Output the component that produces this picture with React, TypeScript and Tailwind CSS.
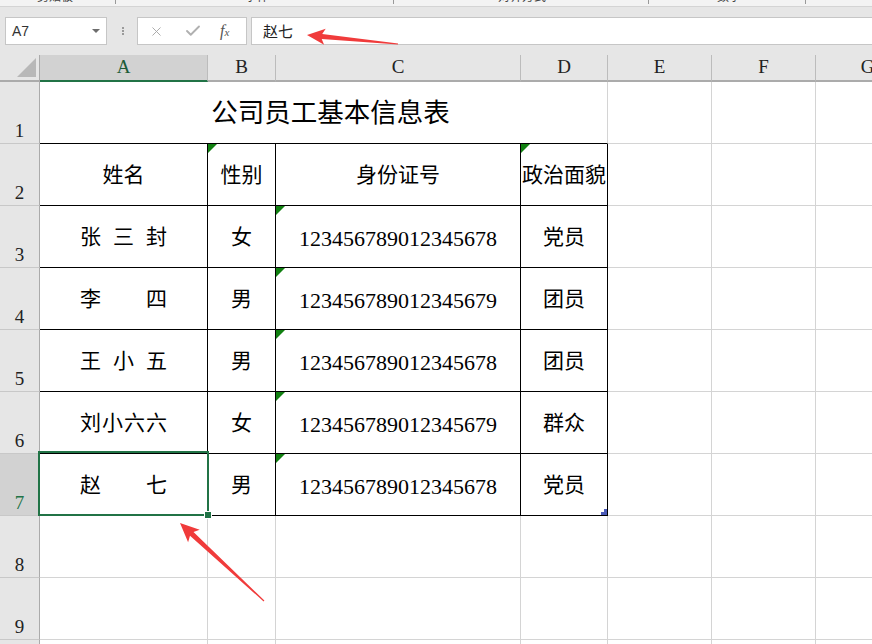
import React from 'react';
import { X, Check } from 'lucide-react';

const cols = [
  { l: 'A', sel: true },
  { l: 'B' },
  { l: 'C' },
  { l: 'D' },
  { l: 'E' },
  { l: 'F' },
  { l: 'G' },
];

const people = [
  { name: ['张', '三', '封'], sex: '女', id: '123456789012345678', pol: '党员' },
  { name: ['李', '四'], sex: '男', id: '123456789012345679', pol: '团员' },
  { name: ['王', '小', '五'], sex: '男', id: '123456789012345678', pol: '团员' },
  { name: ['刘', '小', '六', '六'], sex: '女', id: '123456789012345679', pol: '群众' },
  { name: ['赵', '七'], sex: '男', id: '123456789012345678', pol: '党员' },
];

const serif = "font-['Liberation_Serif','Noto_Sans_CJK_SC',serif]";
const grid = 'border-r border-b border-[#d4d4d4]';
const boxed = 'border-r border-b border-black pt-[3px]';

function Flag() {
  return (
    <svg className="absolute left-0 top-0" width="9" height="9" viewBox="0 0 9 9">
      <polygon points="0,0 9,0 0,9" fill="#118011" />
    </svg>
  );
}

function RowHead({ n, sel }: { n: number; sel?: boolean }) {
  return (
    <div
      className={`h-[62px] border-r border-r-[#ababab] border-b border-b-[#c8c8c8] flex items-end justify-center pb-[3px] text-[19px] leading-none ${serif} ${
        sel ? 'bg-[#d2d2d2] text-[#217346]' : 'bg-[#e6e6e6] text-[#222]'
      }`}
    >
      {n}
    </div>
  );
}

function arrow(tx: number, ty: number, sx: number, sy: number, hl: number, hw: number, nw: number, tw: number) {
  const dx = sx - tx;
  const dy = sy - ty;
  const len = Math.hypot(dx, dy);
  const ux = dx / len;
  const uy = dy / len;
  const px = -uy;
  const py = ux;
  const p = (d: number, w: number) => `${(tx + ux * d + px * w).toFixed(1)},${(ty + uy * d + py * w).toFixed(1)}`;
  return [p(0, 0), p(hl + 3, hw), p(hl, nw), p(len, tw), p(len, -tw), p(hl, -nw), p(hl + 3, -hw)].join(' ');
}

export default function App() {
  return (
    <div className="relative w-[872px] h-[644px] overflow-hidden bg-white font-['Liberation_Sans','Noto_Sans_CJK_SC',sans-serif]">
      {/* ribbon group labels, mostly scrolled off */}
      <div className="h-[7px] bg-[#f3f3f3] border-b border-[#d4d4d4] overflow-hidden">
        <div className="-mt-[12px] flex items-end h-[16px] text-[12px] leading-[16px] text-[#444] font-['Noto_Sans_CJK_SC',sans-serif]">
          <span className="ml-[37px] w-[78px]">剪贴板</span>
          <span className="w-[130px] h-[14px] border-l border-[#999]" />
          <span className="w-[148px]">字体</span>
          <span className="w-[105px] h-[14px] border-l border-[#999]" />
          <span className="w-[150px]">对齐方式</span>
          <span className="w-[69px] h-[14px] border-l border-[#999]" />
          <span className="w-[88px]">数字</span>
          <span className="w-[40px] h-[14px] border-l border-[#999]" />
        </div>
      </div>

      {/* name box + formula bar */}
      <div className="h-[48px] bg-[#e6e6e6] pt-[10px] flex items-start">
        <div className="ml-[5px] w-[102px] h-[28px] bg-white border border-[#c6c6c6] flex items-center pl-[6px] pr-[6px]">
          <span className="flex-1 text-[14px] text-[#333]">A7</span>
          <svg width="8" height="4" viewBox="0 0 8 4">
            <polygon points="0,0 8,0 4,4" fill="#6d6d6d" />
          </svg>
        </div>
        <div className="ml-[15px] mt-[10px] flex flex-col gap-[1px]">
          <span className="w-[2px] h-[2px] bg-[#9a9a9a]" />
          <span className="w-[2px] h-[2px] bg-[#9a9a9a]" />
          <span className="w-[2px] h-[2px] bg-[#9a9a9a]" />
        </div>
        <div className="ml-[13px] w-[110px] h-[28px] bg-white border border-[#c6c6c6] flex items-center pl-[11px]">
          <X size={15} strokeWidth={1.5} color="#a6a6a6" />
          <Check size={18} strokeWidth={2.5} color="#b0b0b0" className="ml-[20px]" />
          <span className="ml-[18px] text-[16px] italic text-[#555] font-['Liberation_Serif',serif]">
            f<span className="text-[11px]">x</span>
          </span>
        </div>
        <div className="ml-[4px] flex-1 -mr-[4px] h-[28px] bg-white border border-[#c6c6c6] flex items-center pl-[11px]">
          <span className="text-[15px] text-[#222] font-['Noto_Sans_CJK_SC',sans-serif]">赵七</span>
        </div>
      </div>

      {/* sheet */}
      <div className={`relative grid grid-cols-[40px_168px_68px_245px_87px_104px_104px_104px] ${serif} text-black`}>
        {/* column header */}
        <div className="h-[27px] bg-[#e6e6e6] border-r border-[#ababab] border-b-2 border-b-[#ababab] flex items-end justify-end pr-[3px] pb-[3px]">
          <svg width="19" height="19" viewBox="0 0 19 19">
            <polygon points="19,0 19,19 0,19" fill="#b8b8b8" />
          </svg>
        </div>
        {cols.map((c) => (
          <div
            key={c.l}
            className={`h-[27px] flex items-center justify-center text-[19px] border-r border-r-[#bcbcbc] border-b-2 ${
              c.sel ? 'bg-[#d2d2d2] border-b-[#217346] text-[#1d5c38]' : 'bg-[#e6e6e6] border-b-[#ababab] text-[#222]'
            }`}
          >
            {c.l}
          </div>
        ))}

        {/* row 1: title */}
        <RowHead n={1} />
        <div className="col-span-4 h-[62px] border-r border-r-[#d4d4d4] border-b border-b-black flex items-center justify-center pl-[14px] pt-[3px] text-[26.5px]">
          公司员工基本信息表
        </div>
        <div className={grid} />
        <div className={grid} />
        <div className={grid} />

        {/* row 2: headings */}
        <RowHead n={2} />
        <div className={`${boxed} h-[62px] flex items-center justify-center text-[21px]`}>姓名</div>
        <div className={`${boxed} relative flex items-center justify-center text-[21px]`}>
          <Flag />
          性别
        </div>
        <div className={`${boxed} flex items-center justify-center text-[21px]`}>身份证号</div>
        <div className={`${boxed} relative flex items-center justify-center text-[21px] whitespace-nowrap`}>
          <Flag />
          政治面貌
        </div>
        <div className={grid} />
        <div className={grid} />
        <div className={grid} />

        {/* rows 3-7: people */}
        {people.map((p, i) => (
          <React.Fragment key={i}>
            <RowHead n={i + 3} sel={i === 4} />
            <div className={`${boxed} h-[62px] flex items-center justify-between px-[40px] text-[21px]`}>
              {p.name.map((ch, j) => (
                <span key={j}>{ch}</span>
              ))}
            </div>
            <div className={`${boxed} flex items-center justify-center text-[21px]`}>{p.sex}</div>
            <div className={`${boxed} relative flex items-center justify-center text-[22px]`}>
              <Flag />
              {p.id}
            </div>
            <div className={`${boxed} relative flex items-center justify-center text-[21px]`}>
              {p.pol}
              {i === 4 && (
                <svg className="absolute right-0 bottom-0" width="6" height="6" viewBox="0 0 6 6">
                  <polygon points="3,0 6,0 6,6 0,6 0,3 3,3" fill="#4b5bb8" />
                </svg>
              )}
            </div>
            <div className={grid} />
            <div className={grid} />
            <div className={grid} />
          </React.Fragment>
        ))}

        {/* empty rows */}
        {[8, 9, 10].map((n) => (
          <React.Fragment key={n}>
            <RowHead n={n} />
            {cols.map((c) => (
              <div key={c.l} className={`${grid} h-[62px]`} />
            ))}
          </React.Fragment>
        ))}

        {/* selection on A7 */}
        <div className="absolute left-[38px] top-[396px] w-[171px] h-[65px] border-2 border-[#217346] pointer-events-none">
          <div className="absolute -right-[4px] -bottom-[4px] w-[6px] h-[6px] bg-[#217346] outline outline-1 outline-white" />
        </div>
      </div>

      {/* red callout arrows */}
      <svg className="absolute left-0 top-0 pointer-events-none" width="872" height="644" viewBox="0 0 872 644">
        <polygon points={arrow(307, 35, 398, 44, 15, 8, 2.5, 0.6)} fill="#f03b3b" />
        <polygon points={arrow(180, 523, 264, 601, 16, 8.5, 2.6, 0.6)} fill="#f03b3b" />
      </svg>
    </div>
  );
}
